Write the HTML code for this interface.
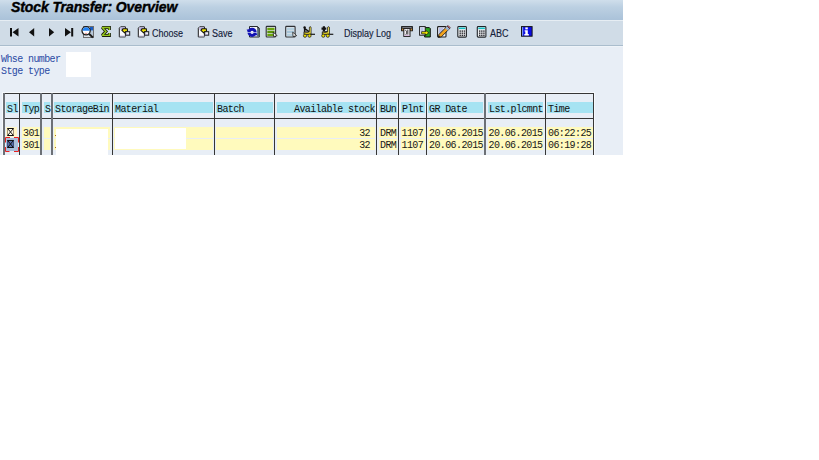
<!DOCTYPE html>
<html><head><meta charset="utf-8">
<style>
html,body{margin:0;padding:0;background:#fff;width:819px;height:460px;overflow:hidden;position:relative;}
.a{position:absolute;}
#app{position:absolute;left:0;top:0;width:623px;height:155px;background:#e8eef6;overflow:hidden;}
#title{left:0;top:0;width:623px;height:20px;background:linear-gradient(#cfdeeb 0%,#bcd0e2 35%,#aac2d9 100%);}
#title span{position:absolute;left:11px;top:-1.2px;font:italic bold 14px "Liberation Sans",sans-serif;letter-spacing:-0.1px;color:#000;white-space:nowrap;-webkit-text-stroke:0.4px #000;}
.tt{position:absolute;font:10px "Liberation Sans",sans-serif;color:#14213a;white-space:nowrap;top:27.5px;transform:scaleX(0.9);-webkit-text-stroke:0.15px #14213a;transform-origin:0 0;}
.lbl{position:absolute;font:10px/12px "Liberation Mono",monospace;letter-spacing:-0.6px;color:#2a4aa4;white-space:nowrap;}
.hd{position:absolute;top:102px;height:11px;background:#a6e3f2;}
.ht{position:absolute;top:104px;font:10px/12px "Liberation Mono",monospace;letter-spacing:-0.6px;color:#101010;white-space:nowrap;}
.ye{position:absolute;height:11px;background:#fffabd;}
.dt{position:absolute;font:10px/12px "Liberation Mono",monospace;letter-spacing:-0.6px;color:#181818;white-space:nowrap;}
</style></head><body>
<div id="app">
<div class="a" id="title"><span>Stock Transfer: Overview</span></div>
<div class="a" style="left:0;top:20px;width:623px;height:1px;background:#e6edf3"></div>
<div class="a" style="left:0;top:21px;width:623px;height:24px;background:#d0dce7"></div>
<div class="a" style="left:0;top:45px;width:623px;height:1px;background:#aabdcd"></div>
<div class="a" style="left:0;top:46px;width:623px;height:1px;background:#eff4f9"></div>

<svg class="a" style="left:0;top:0" width="623" height="46" viewBox="0 0 623 46">
<rect x="10" y="28" width="2" height="8.5" fill="#111"/><path d="M18.5 28 L12.5 32.2 L18.5 36.5 Z" fill="#111"/>
<path d="M34.2 28 L29 32.2 L34.2 36.5 Z" fill="#111"/>
<path d="M49 28 L54.2 32.2 L49 36.5 Z" fill="#111"/>
<path d="M65 28 L71 32.2 L65 36.5 Z" fill="#111"/><rect x="71.2" y="28" width="2" height="8.5" fill="#111"/>
<g transform="translate(80,24)">
<rect x="3.5" y="2.5" width="10" height="11" fill="#dde3ea" stroke="#6e6e70" stroke-width="1"/>
<rect x="10" y="3" width="3" height="3.5" fill="#1a5ec4"/>
<rect x="10.5" y="7" width="2.5" height="4" fill="#b8c8d8"/>
<circle cx="6.1" cy="6.8" r="4.1" fill="#fff" stroke="#1c1c1c" stroke-width="1.3"/>
<path d="M2.6 6.8 A3.5 3.5 0 0 1 9.6 6.8 Z" fill="#2282f2"/>
<path d="M5 9.2 Q6.1 9.8 7.2 9.2" fill="none" stroke="#e04040" stroke-width="0.6"/>
<path d="M9.2 9.9 L12.9 13.4" stroke="#1c1c1c" stroke-width="2"/>
</g>
<g transform="translate(97.4,24)">
<path d="M12 6 V3.5 H4.8 L8.6 7.4 L4.8 11.4 H12 V9" fill="none" stroke="#1a1e10" stroke-width="3" stroke-linejoin="miter" stroke-miterlimit="2.2" stroke-linecap="butt"/>
<path d="M12 6 V3.5 H4.8 L8.6 7.4 L4.8 11.4 H12 V9" fill="none" stroke="#94c41c" stroke-width="1.4" stroke-linejoin="miter" stroke-miterlimit="2.2" stroke-linecap="butt"/>
</g>
<g transform="translate(116,24)">
<path d="M3.3 4.2 L4.6 2.8 H9.4 V12.9 H3.3 Z" fill="#fafafc" stroke="#1a1a1a" stroke-width="1"/>
<rect x="4.3" y="3.3" width="4.5" height="2.4" fill="#b8b0dc"/>
<rect x="3.8" y="11.6" width="6" height="0.9" fill="#c4c0e0"/>
<path d="M5.9 6.4 L7.2 4.7 H11.3 L11.6 7.6 H9.9 L8.7 8.9 Z" fill="#ecdf00" stroke="#111" stroke-width="1.1" stroke-linejoin="round"/>
<rect x="9.7" y="7.7" width="4" height="3.5" fill="#eeeef8" stroke="#1e1e1e" stroke-width="1"/>
<rect x="10.3" y="10.2" width="2.8" height="0.6" fill="#9890c0"/>
</g>
<g transform="translate(135,24)">
<path d="M3.3 4.2 L4.6 2.8 H9.4 V12.9 H3.3 Z" fill="#fafafc" stroke="#1a1a1a" stroke-width="1"/>
<rect x="4.3" y="3.3" width="4.5" height="2.4" fill="#b8b0dc"/>
<rect x="3.8" y="11.6" width="6" height="0.9" fill="#c4c0e0"/>
<path d="M5.9 6.4 L7.2 4.7 H11.3 L11.6 7.6 H9.9 L8.7 8.9 Z" fill="#ecdf00" stroke="#111" stroke-width="1.1" stroke-linejoin="round"/>
<rect x="9.7" y="7.7" width="4" height="3.5" fill="#eeeef8" stroke="#1e1e1e" stroke-width="1"/>
<rect x="10.3" y="10.2" width="2.8" height="0.6" fill="#9890c0"/>
</g>
<g transform="translate(195,24)">
<path d="M3.3 4.2 L4.6 2.8 H9.4 V12.9 H3.3 Z" fill="#fafafc" stroke="#1a1a1a" stroke-width="1"/>
<rect x="4.3" y="3.3" width="4.5" height="2.4" fill="#b8b0dc"/>
<rect x="3.8" y="11.6" width="6" height="0.9" fill="#c4c0e0"/>
<path d="M5.9 6.4 L7.2 4.7 H11.3 L11.6 7.6 H9.9 L8.7 8.9 Z" fill="#ecdf00" stroke="#111" stroke-width="1.1" stroke-linejoin="round"/>
<rect x="9.7" y="7.7" width="4" height="3.5" fill="#eeeef8" stroke="#1e1e1e" stroke-width="1"/>
<rect x="10.3" y="10.2" width="2.8" height="0.6" fill="#9890c0"/>
</g>
<g transform="translate(245,24)">
<path d="M4.5 2.5 H12.5 L14.3 4.3 V13 H4.5 Z" fill="#f4f6f8" stroke="#262a2c" stroke-width="1"/>
<rect x="12.2" y="4.5" width="1.7" height="8" fill="#48606a"/>
<path d="M12.5 2.5 V4.3 H14.3" fill="none" stroke="#262a2c" stroke-width="0.8"/>
<circle cx="7.1" cy="8.3" r="3.1" fill="none" stroke="#1212b4" stroke-width="3"/>
<path d="M1.6 5.4 H6 L3.6 9 Z" fill="#1212b4"/>
<path d="M12.4 11.2 H8 L10.4 7.6 Z" fill="#1212b4"/>
<rect x="1.8" y="8" width="10.4" height="0.7" fill="#d0d6f4"/>
</g>
<g transform="translate(263,24)">
<rect x="3.2" y="2.4" width="9.4" height="10.6" rx="0.8" fill="#dde2e8" stroke="#2e3034" stroke-width="1.1"/>
<rect x="4.3" y="3.8" width="7.2" height="2.3" fill="#6aa40c"/>
<rect x="4.3" y="6.8" width="7.2" height="2.3" fill="#5a9408"/>
<rect x="4.3" y="9.8" width="7.2" height="2.3" fill="#6aa40c"/>
<path d="M10.2 8.2 L14.2 11.6 L10.6 12.6 Z" fill="#fff" stroke="#1a1a1a" stroke-width="0.8"/>
</g>
<g transform="translate(282.5,24)">
<rect x="3.2" y="2.4" width="9.4" height="10.6" rx="0.8" fill="#dde2e8" stroke="#2e3034" stroke-width="1.1"/>
<rect x="4.3" y="3.8" width="7.2" height="2.3" fill="#b4d0e0"/>
<rect x="4.3" y="6.8" width="7.2" height="2.3" fill="#a6c4d8"/>
<rect x="4.3" y="9.8" width="7.2" height="2.3" fill="#b4d0e0"/>
<path d="M10.2 8.2 L14.2 11.6 L10.6 12.6 Z" fill="#fff" stroke="#1a1a1a" stroke-width="0.8"/>
</g>
<g transform="translate(301,24)">
<circle cx="3.6" cy="3.4" r="1.2" fill="#111"/><path d="M3.6 3.2 V8 M3.8 4.6 L8.3 7.8" stroke="#111" stroke-width="1.4"/><path d="M4.5 6 L7.5 7.6 L4.5 7.8 Z" fill="#444"/>
<path d="M8.4 3.2 Q9.2 2.2 10 3.2 V10.4 H3 V7.8 Q5.5 9 8.4 7.8 Z" fill="#e8d41c" stroke="#1a1a1a" stroke-width="0.9" stroke-linejoin="round"/>
<path d="M9.2 3.5 V9" stroke="#f8f080" stroke-width="0.6"/>
<path d="M10 10.3 H14" stroke="#1a1a1a" stroke-width="1.2"/>
<circle cx="4" cy="11.7" r="1.6" fill="#ece000" stroke="#222" stroke-width="0.8"/>
<circle cx="8.5" cy="11.7" r="1.6" fill="#ece000" stroke="#222" stroke-width="0.8"/>
</g>
<g transform="translate(319.3,24)">
<path d="M2.2 4.6 H7 M4.6 2.2 V7.2" stroke="#111" stroke-width="2.2"/><path d="M4 7.6 H8.2" stroke="#333" stroke-width="1"/>
<path d="M8.4 3.2 Q9.2 2.2 10 3.2 V10.4 H3 V7.8 Q5.5 9 8.4 7.8 Z" fill="#e8d41c" stroke="#1a1a1a" stroke-width="0.9" stroke-linejoin="round"/>
<path d="M9.2 3.5 V9" stroke="#f8f080" stroke-width="0.6"/>
<path d="M10 10.3 H14" stroke="#1a1a1a" stroke-width="1.2"/>
<circle cx="4" cy="11.7" r="1.6" fill="#ece000" stroke="#222" stroke-width="0.8"/>
<circle cx="8.5" cy="11.7" r="1.6" fill="#ece000" stroke="#222" stroke-width="0.8"/>
</g>
<g transform="translate(399,24)">
<rect x="2.6" y="2.6" width="10.8" height="4.2" fill="#242426" stroke="#141414" stroke-width="0.9"/>
<rect x="3.4" y="3.3" width="9.2" height="0.8" fill="#a8acb4"/>
<rect x="3" y="4.6" width="1.6" height="1.8" fill="#c88a30"/><rect x="11.4" y="4.6" width="1.6" height="1.8" fill="#c88a30"/>
<rect x="4.8" y="4.4" width="6.2" height="8" fill="#f2f0f6" stroke="#1a1a1a" stroke-width="1"/>
<rect x="5.4" y="11" width="5" height="0.9" fill="#d8b8e0"/>
<path d="M6.3 6.2 Q9 7.2 6.8 10.8 M8.8 5.6 V10.6" fill="none" stroke="#2a2a2a" stroke-width="0.9"/>
</g>
<g transform="translate(417,24)">
<path d="M7.6 3.6 H12.3 L13.3 4.6 V13 H7.6 Z" fill="#2aa41e" stroke="#111" stroke-width="1"/>
<rect x="2.6" y="2.6" width="5.6" height="8.6" fill="#f6f8fc" stroke="#1c1c1c" stroke-width="1"/>
<rect x="3.6" y="3.4" width="3" height="5" fill="#bcc6e8"/>
<path d="M4.6 7.7 H8.6 V6.3 L11.8 8.8 L8.6 11.3 V9.9 H4.6 Z" fill="#f4e800" stroke="#1a1a1a" stroke-width="0.8"/>
</g>
<g transform="translate(435,24)">
<rect x="2.6" y="2.6" width="8.4" height="10.4" rx="0.8" fill="#f0f2f8" stroke="#1e1e1e" stroke-width="1.1"/>
<rect x="4" y="3.6" width="4.2" height="6" fill="#b8bee6"/>
<path d="M3.4 13.4 L4 10.4 L12.2 2.2 L14.6 4.6 L6.4 12.8 Z" fill="#f2a21c" stroke="#1a1a1a" stroke-width="0.9"/>
<path d="M3.4 13.4 L3.8 11.6 L5.2 13 Z" fill="#111"/>
<path d="M10.2 4.2 L12.2 2.2 L14.6 4.6 L12.6 6.6 Z" fill="#9cb4d4"/>
<path d="M12.2 2.2 L13 1.4 L15.4 3.8 L14.6 4.6 Z" fill="#e85a6a" stroke="#1a1a1a" stroke-width="0.6"/>
</g>
<g transform="translate(455,24)">
<rect x="2.8" y="2.5" width="8.6" height="10.6" rx="0.9" fill="#eceef0" stroke="#202428" stroke-width="1.1"/>
<rect x="3.8" y="3.5" width="6.6" height="1.6" fill="#14bcc0"/>
<rect x="4.5" y="6.3999999999999995" width="1.4" height="1.4" fill="#2e2e34"/><rect x="4.5" y="8.5" width="1.4" height="1.4" fill="#2e2e34"/><rect x="4.5" y="10.600000000000001" width="1.4" height="1.4" fill="#2e2e34"/><rect x="6.6" y="6.3999999999999995" width="1.4" height="1.4" fill="#2e2e34"/><rect x="6.6" y="8.5" width="1.4" height="1.4" fill="#2e2e34"/><rect x="6.6" y="10.600000000000001" width="1.4" height="1.4" fill="#2e2e34"/><rect x="8.700000000000001" y="6.3999999999999995" width="1.4" height="1.4" fill="#2e2e34"/><rect x="8.700000000000001" y="8.5" width="1.4" height="1.4" fill="#2e2e34"/><rect x="8.700000000000001" y="10.600000000000001" width="1.4" height="1.4" fill="#2e2e34"/>
</g>
<g transform="translate(474.5,24)">
<rect x="2.8" y="2.5" width="8.6" height="10.6" rx="0.9" fill="#eceef0" stroke="#202428" stroke-width="1.1"/>
<rect x="3.8" y="3.5" width="6.6" height="1.6" fill="#14bcc0"/>
<rect x="4.5" y="6.3999999999999995" width="1.4" height="1.4" fill="#2e2e34"/><rect x="4.5" y="8.5" width="1.4" height="1.4" fill="#2e2e34"/><rect x="4.5" y="10.600000000000001" width="1.4" height="1.4" fill="#2e2e34"/><rect x="6.6" y="6.3999999999999995" width="1.4" height="1.4" fill="#2e2e34"/><rect x="6.6" y="8.5" width="1.4" height="1.4" fill="#2e2e34"/><rect x="6.6" y="10.600000000000001" width="1.4" height="1.4" fill="#2e2e34"/><rect x="8.700000000000001" y="6.3999999999999995" width="1.4" height="1.4" fill="#2e2e34"/><rect x="8.700000000000001" y="8.5" width="1.4" height="1.4" fill="#2e2e34"/><rect x="8.700000000000001" y="10.600000000000001" width="1.4" height="1.4" fill="#2e2e34"/>
</g>
<g transform="translate(519,24)">
<rect x="2.5" y="2.6" width="10.6" height="9.6" fill="#0c0ce4" stroke="#141414" stroke-width="1"/>
<rect x="3" y="3.1" width="1.2" height="8.6" fill="#7890f0"/>
<rect x="6.3" y="3.4" width="2.5" height="2" fill="#fff"/>
<path d="M5.6 6.3 H8.8 V10.1 H9.8 V11.5 H5.3 V10.1 H6.3 V7.5 H5.6 Z" fill="#fff"/>
</g>
</svg>
<div class="tt" style="left:152px">Choose</div>
<div class="tt" style="left:212px">Save</div>
<div class="tt" style="left:344px">Display Log</div>
<div class="tt" style="left:489.5px">ABC</div>
<div class="lbl" style="left:1px;top:54px">Whse number</div>
<div class="lbl" style="left:1px;top:66px">Stge type</div>
<div class="a" style="left:66px;top:52px;width:25px;height:25px;background:#fff"></div>
<div class="a" style="left:2px;top:92px;width:593px;height:1px;background:#f6f9fc"></div>
<div class="a" style="left:2px;top:92px;width:1px;height:63px;background:#f6f9fc"></div>
<div class="a" style="left:594px;top:92px;width:1px;height:63px;background:#f6f9fc"></div>
<div class="a" style="left:3px;top:93px;width:591px;height:1px;background:#363636"></div>
<div class="a" style="left:3px;top:118px;width:591px;height:1px;background:#363636"></div>
<div class="hd" style="left:6px;width:12px"></div>
<div class="hd" style="left:22px;width:18px"></div>
<div class="hd" style="left:44px;width:6px"></div>
<div class="hd" style="left:54px;width:56px"></div>
<div class="hd" style="left:114px;width:99px"></div>
<div class="hd" style="left:216px;width:57px"></div>
<div class="hd" style="left:277px;width:98px"></div>
<div class="hd" style="left:379px;width:18px"></div>
<div class="hd" style="left:401px;width:24px"></div>
<div class="hd" style="left:428px;width:55px"></div>
<div class="hd" style="left:488px;width:55px"></div>
<div class="hd" style="left:547px;width:46px"></div>
<div class="ht" style="left:7px">Sl</div>
<div class="ht" style="left:23px">Typ</div>
<div class="ht" style="left:45px">S</div>
<div class="ht" style="left:55px">StorageBin</div>
<div class="ht" style="left:115px">Material</div>
<div class="ht" style="left:217px">Batch</div>
<div class="ht" style="left:277px;width:98px;text-align:right">Available stock</div>
<div class="ht" style="left:380px">BUn</div>
<div class="ht" style="left:402px">Plnt</div>
<div class="ht" style="left:429px">GR Date</div>
<div class="ht" style="left:489px">Lst.plcmnt</div>
<div class="ht" style="left:548px">Time</div>
<div class="ye" style="left:22px;top:127px;width:18px"></div>
<div class="ye" style="left:44px;top:127px;width:6px"></div>
<div class="ye" style="left:54px;top:127px;width:56px"></div>
<div class="ye" style="left:114px;top:127px;width:99px"></div>
<div class="ye" style="left:216px;top:127px;width:57px"></div>
<div class="ye" style="left:277px;top:127px;width:98px"></div>
<div class="ye" style="left:379px;top:127px;width:18px"></div>
<div class="ye" style="left:401px;top:127px;width:24px"></div>
<div class="ye" style="left:428px;top:127px;width:55px"></div>
<div class="ye" style="left:488px;top:127px;width:55px"></div>
<div class="ye" style="left:547px;top:127px;width:46px"></div>
<div class="ye" style="left:22px;top:139px;width:18px"></div>
<div class="ye" style="left:44px;top:139px;width:6px"></div>
<div class="ye" style="left:54px;top:139px;width:56px"></div>
<div class="ye" style="left:114px;top:139px;width:99px"></div>
<div class="ye" style="left:216px;top:139px;width:57px"></div>
<div class="ye" style="left:277px;top:139px;width:98px"></div>
<div class="ye" style="left:379px;top:139px;width:18px"></div>
<div class="ye" style="left:401px;top:139px;width:24px"></div>
<div class="ye" style="left:428px;top:139px;width:55px"></div>
<div class="ye" style="left:488px;top:139px;width:55px"></div>
<div class="ye" style="left:547px;top:139px;width:46px"></div>
<div class="a" style="left:6px;top:127px;width:11px;height:10px;background:#fff6c8"></div>
<div class="a" style="left:6px;top:138px;width:12px;height:13px;background:#a9bedb"></div>
<svg class="a" style="left:0;top:120px" width="24" height="35" viewBox="0 120 24 35">
<rect x="7.5" y="128.5" width="6.2" height="7" fill="#fffae6"/>
<path d="M7 128.5 H14 M7 135.5 H14" stroke="#111" stroke-width="1"/>
<path d="M7.5 128.5 V135.5 M13.5 128.5 V135.5" stroke="#8a7a60" stroke-width="0.8"/>
<path d="M8 129 L13 135 M13 129 L8 135" stroke="#1a1a1a" stroke-width="1"/>
<rect x="7.5" y="140.5" width="6.2" height="7" fill="#5a72b0"/>
<path d="M7 140.5 H14 M7 147.5 H14" stroke="#111" stroke-width="1"/>
<path d="M7.5 140.5 V147.5 M13.5 140.5 V147.5" stroke="#304070" stroke-width="0.8"/>
<path d="M8 141 L13 147 M13 141 L8 147" stroke="#111" stroke-width="1"/>
<path d="M5.5 142.5 V137.5 H10 M14 137.5 H18.5 V142.5 M18.5 147 V151.5 H14 M9.5 151.5 H5.5 V147" fill="none" stroke="#e82020" stroke-width="1"/>
</svg>
<div class="dt" style="left:23px;top:128px">301</div>
<div class="dt" style="left:547px;top:128px"></div>
<div class="dt" style="left:300px;width:70px;text-align:right;top:128px">32</div>
<div class="dt" style="left:380px;top:128px">DRM</div>
<div class="dt" style="left:401.5px;top:128px">1107</div>
<div class="dt" style="left:429px;top:128px">20.06.2015</div>
<div class="dt" style="left:488.5px;top:128px">20.06.2015</div>
<div class="dt" style="left:548px;top:128px">06:22:25</div>
<div class="dt" style="left:23px;top:140px">301</div>
<div class="dt" style="left:547px;top:140px"></div>
<div class="dt" style="left:300px;width:70px;text-align:right;top:140px">32</div>
<div class="dt" style="left:380px;top:140px">DRM</div>
<div class="dt" style="left:401.5px;top:140px">1107</div>
<div class="dt" style="left:429px;top:140px">20.06.2015</div>
<div class="dt" style="left:488.5px;top:140px">20.06.2015</div>
<div class="dt" style="left:548px;top:140px">06:19:28</div>
<div class="a" style="left:56px;top:129px;width:52px;height:26px;background:#fff"></div>
<div class="a" style="left:115px;top:128px;width:71px;height:21px;background:#fff"></div>
<div class="a" style="left:55px;top:135px;width:1px;height:1px;background:#b07020"></div>
<div class="a" style="left:55px;top:147px;width:1px;height:1px;background:#b07020"></div>
<div class="a" style="left:3px;top:93px;width:2px;height:62px;background:#6c7076"></div>
<div class="a" style="left:19px;top:93px;width:1px;height:62px;background:#363636"></div>
<div class="a" style="left:40px;top:93px;width:2px;height:62px;background:#6c7076"></div>
<div class="a" style="left:51px;top:93px;width:2px;height:62px;background:#6c7076"></div>
<div class="a" style="left:112px;top:93px;width:1px;height:62px;background:#363636"></div>
<div class="a" style="left:214px;top:93px;width:1px;height:62px;background:#363636"></div>
<div class="a" style="left:274px;top:93px;width:1px;height:62px;background:#363636"></div>
<div class="a" style="left:376px;top:93px;width:1px;height:62px;background:#363636"></div>
<div class="a" style="left:398px;top:93px;width:1px;height:62px;background:#363636"></div>
<div class="a" style="left:426px;top:93px;width:1px;height:62px;background:#363636"></div>
<div class="a" style="left:484px;top:93px;width:2px;height:62px;background:#6c7076"></div>
<div class="a" style="left:545px;top:93px;width:1px;height:62px;background:#363636"></div>
<div class="a" style="left:593px;top:93px;width:1px;height:62px;background:#363636"></div>
</div>
</body></html>
